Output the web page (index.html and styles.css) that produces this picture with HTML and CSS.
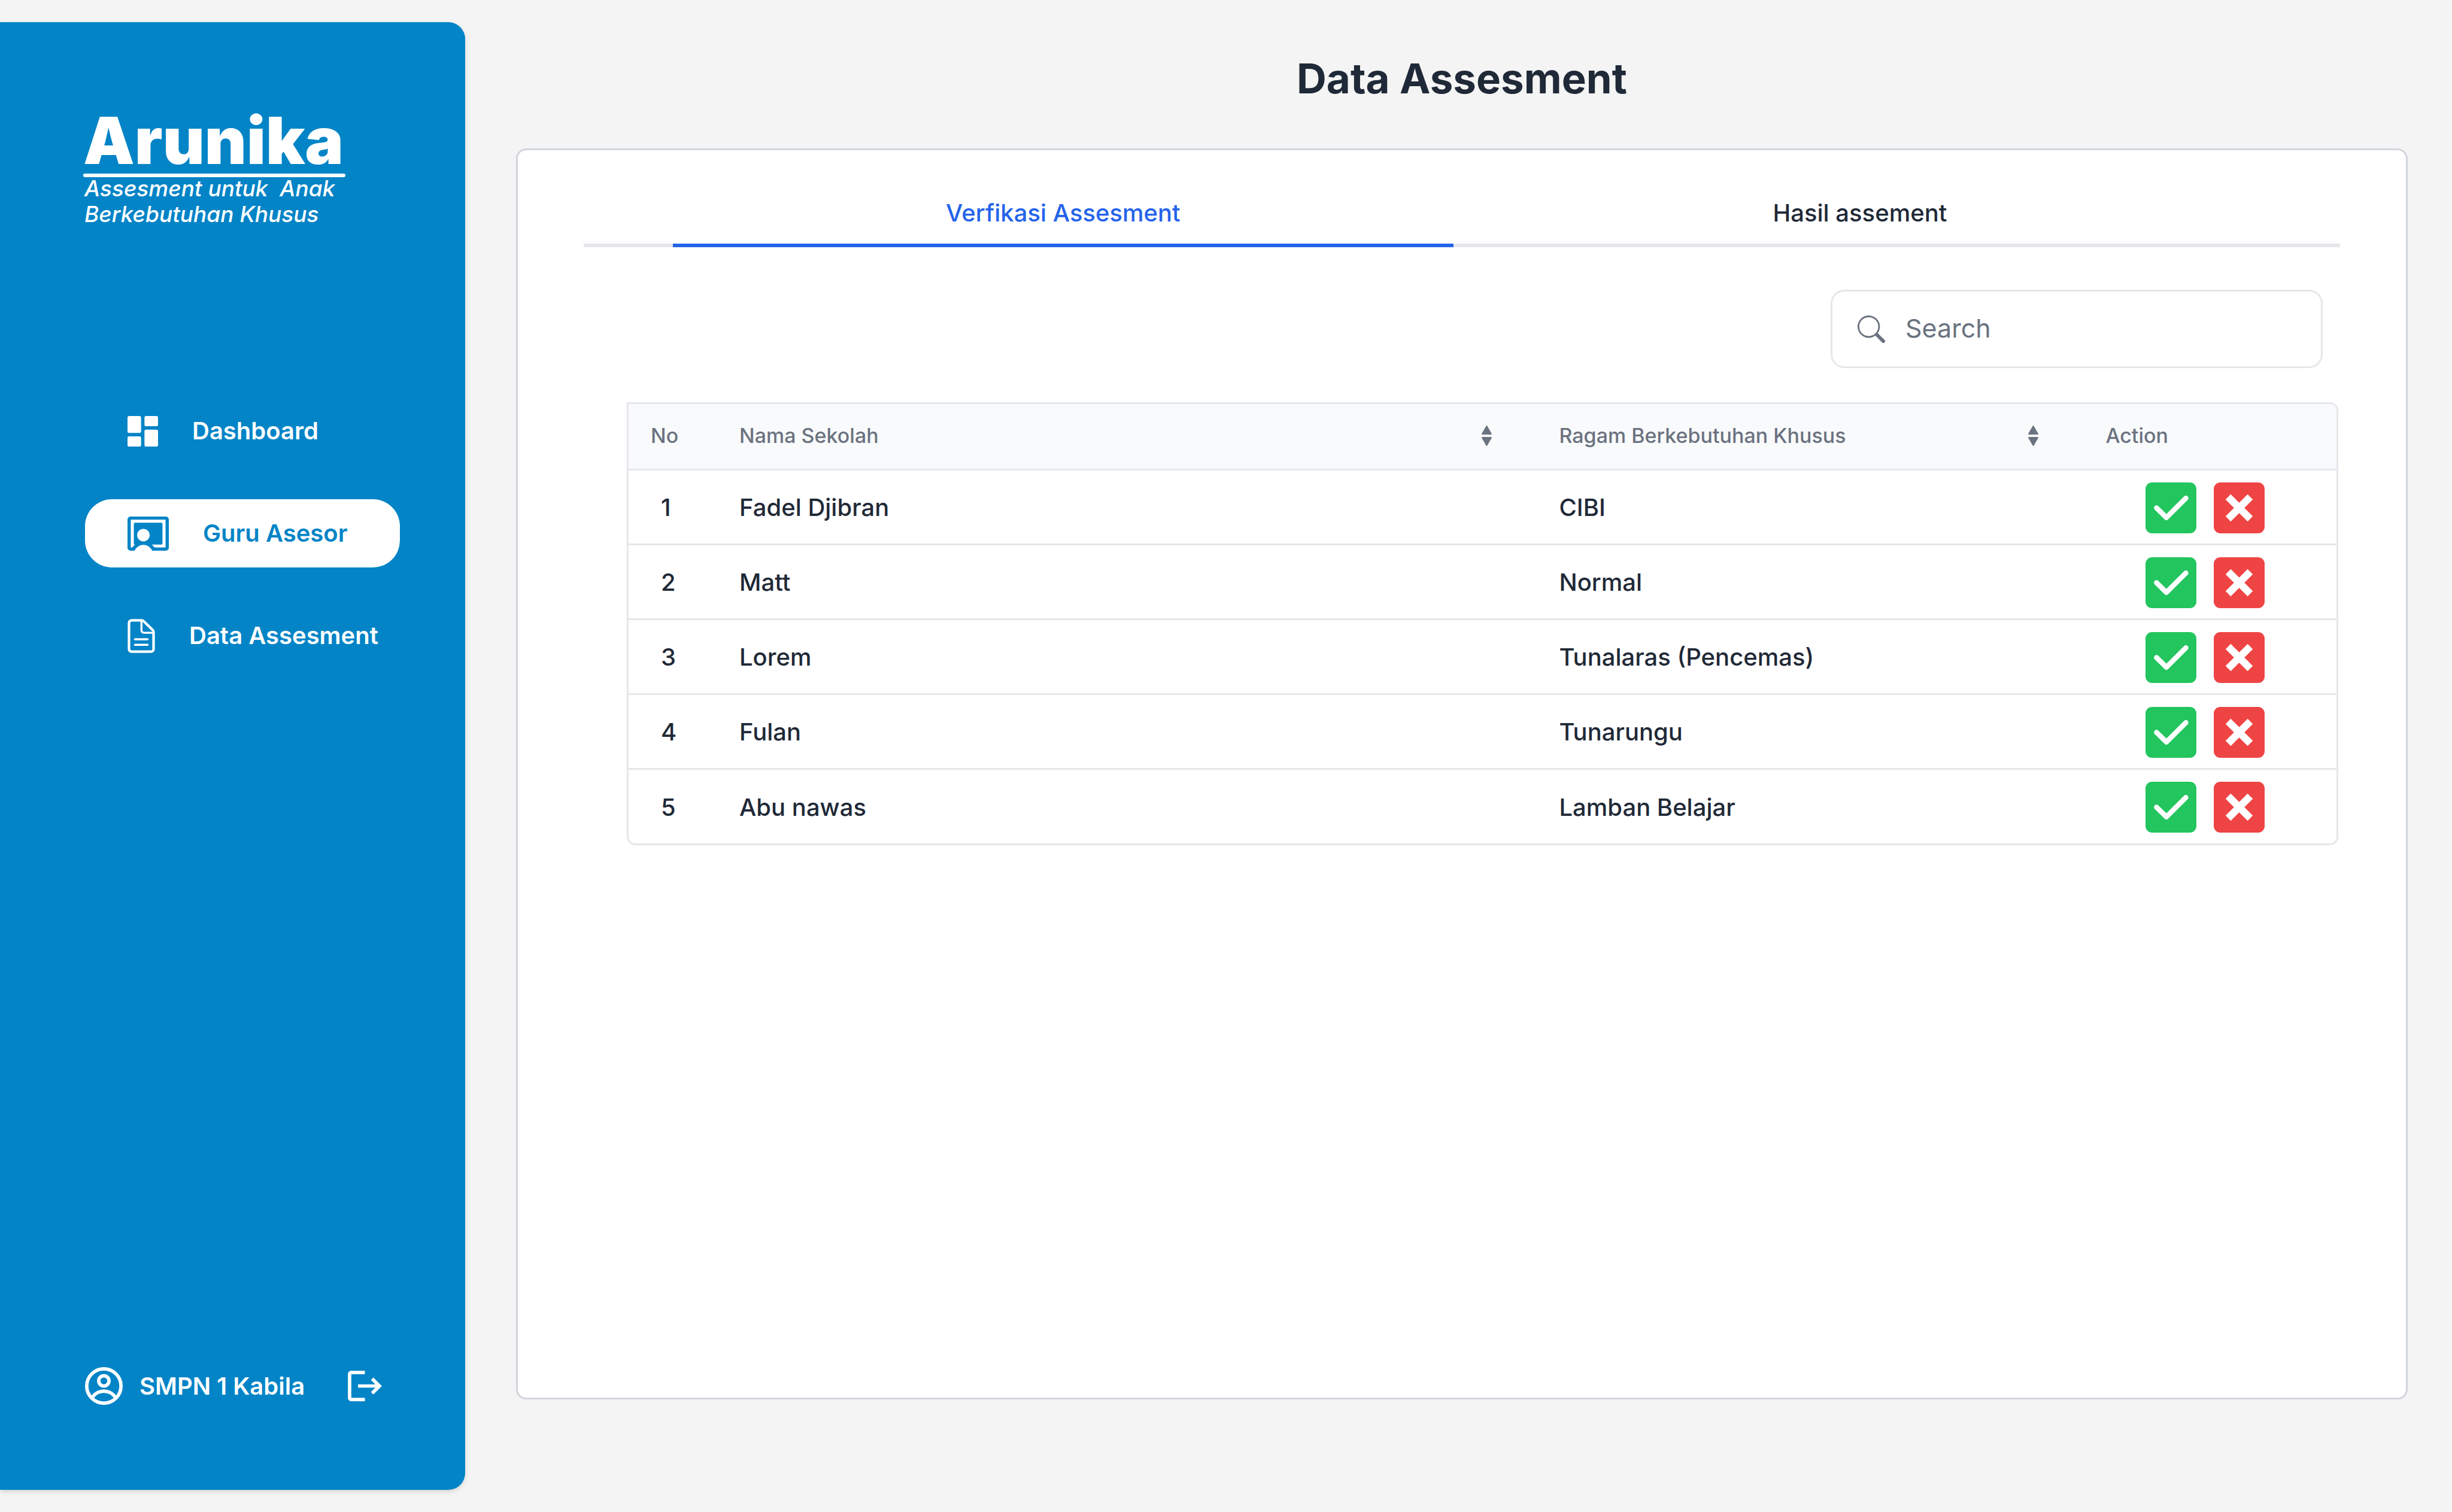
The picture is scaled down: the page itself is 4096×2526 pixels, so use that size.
FILE: index.html
```html
<!DOCTYPE html>
<html lang="id">
<head>
<meta charset="utf-8">
<meta name="viewport" content="width=device-width, initial-scale=1">
<title>Arunika - Data Assesment</title>
<link rel="stylesheet" href="styles.css">
</head>
<body>
<svg class="sprite" aria-hidden="true">
  <symbol id="icon-check" viewBox="0 0 30 30"><path d="M6.5 15l5.8 5.7L23.8 9.3" fill="none" stroke="currentColor" stroke-width="3" stroke-linecap="round" stroke-linejoin="round"/></symbol>
  <symbol id="icon-cross" viewBox="0 0 30 30"><path d="M8.5 8.5l13 13M21.5 8.5l-13 13" fill="none" stroke="currentColor" stroke-width="4.3"/></symbol>
  <symbol id="icon-sort" viewBox="0 0 17 34"><path d="M8.5 1L16 14H1zM8.5 33L16 20H1z" fill="currentColor" stroke="currentColor" stroke-width="2" stroke-linejoin="round"/></symbol>
</svg>
<div class="layout">
  <aside class="sidebar">
    <div class="brand">
      <p class="brand-name">Arunika</p>
      <p class="brand-tagline">Assesment untuk&nbsp; Anak<br>Berkebutuhan Khusus</p>
    </div>
    <nav class="menu">
      <a class="menu-item" href="#">
        <svg class="icon-dashboard" viewBox="0 0 18 18" fill="currentColor"><rect width="8" height="10" rx="1"/><rect x="10" width="8" height="6" rx="1"/><rect y="12" width="8" height="6" rx="1"/><rect x="10" y="8" width="8" height="10" rx="1"/></svg>
        Dashboard
      </a>
      <a class="menu-item menu-item-active" href="#">
        <svg class="icon-teacher" viewBox="0 0 24.2 20"><rect width="24.2" height="20" rx="1.7" fill="#0284c7"/><rect x="1.9" y="1.8" width="20.4" height="16.3" fill="#fff"/><rect x="3.7" y="3.6" width="16.8" height="12.8" rx=".9" fill="#0284c7"/><circle cx="9.3" cy="22.3" r="7.7" fill="#0284c7"/><circle cx="9.3" cy="22.2" r="5.6" fill="#fff"/><circle cx="9.3" cy="10.9" r="3.7" fill="#fff"/></svg>
        Guru Asesor
      </a>
      <a class="menu-item" href="#">
        <svg class="icon-file" viewBox="0 0 16 20" fill="none" stroke="currentColor" stroke-linecap="round" stroke-linejoin="round"><path d="M2.5.8h5.8c.5 0 .8.2 1.1.5l5.3 5.2c.3.3.5.7.5 1.1v9.900c0 1-.7 1.700-1.700 1.700h-11c-1 0-1.700-.7-1.700-1.700v-15C.8 1.500 1.500.8 2.500.8z" stroke-width="1.5"/><path d="M8.100 1v5.600c0 .9.600 1.500 1.500 1.500h5.400M4.300 11.900h7.400M4.300 15.200h7.400" stroke-width="1.200"/></svg>
        Data Assesment
      </a>
    </nav>
    <div class="account">
      <svg class="icon-user" viewBox="0 0 22 22" fill="none" stroke="#fff" stroke-width="2"><circle cx="11" cy="11" r="10"/><circle cx="11" cy="8" r="3"/><path d="M4 18.100A8 8 0 0 1 18 18.100"/></svg>
      <span class="account-name">SMPN 1 Kabila</span>
      <button class="logout" type="button" aria-label="Keluar"><svg class="icon-logout" viewBox="0 0 20 18" fill="currentColor"><path d="M10 0v2H2v14h8v2H2c-1.100 0-2-.9-2-2V2C0 .9.900 0 2 0zM15 4l5 5-5 5-1.400-1.450L16.170 10H6V8h10.170l-2.570-2.550z"/></svg></button>
    </div>
  </aside>

  <main class="content">
    <h1 class="page-title">Data Assesment</h1>
    <section class="card">
      <div class="tabs" role="tablist">
        <button class="tab tab-active" type="button" role="tab" aria-selected="true">Verfikasi Assesment</button>
        <button class="tab" type="button" role="tab" aria-selected="false">Hasil assement</button>
      </div>
      <label class="search">
        <svg class="icon-search" viewBox="0 0 16 16" fill="currentColor"><path d="M11.742 10.344a6.500 6.500 0 1 0-1.397 1.398h-.001c.03.04.062.078.098.115l3.850 3.850a1 1 0 0 0 1.415-1.414l-3.850-3.850a1.007 1.007 0 0 0-.115-.1zM12 6.500a5.500 5.500 0 1 1-11 0 5.500 5.500 0 0 1 11 0z"/></svg>
        <input class="search-input" type="search" placeholder="Search" aria-label="Search">
      </label>
      <div class="table-wrap">
        <table class="table">
          <colgroup><col class="col-no"><col class="col-name"><col class="col-kind"><col></colgroup>
          <thead>
            <tr>
              <th class="head-no" scope="col">No</th>
              <th scope="col"><div class="sortable">Nama Sekolah <button class="sort" type="button" aria-label="Urutkan nama"><svg class="icon-sort"><use href="#icon-sort"/></svg></button></div></th>
              <th scope="col"><div class="sortable">Ragam Berkebutuhan Khusus <button class="sort" type="button" aria-label="Urutkan ragam"><svg class="icon-sort"><use href="#icon-sort"/></svg></button></div></th>
              <th scope="col">Action</th>
            </tr>
          </thead>
          <tbody>
            <tr><td class="cell-no">1</td><td>Fadel Djibran</td><td>CIBI</td><td><div class="actions"><button class="action accept" type="button" aria-label="Terima"><svg><use href="#icon-check"/></svg></button><button class="action reject" type="button" aria-label="Tolak"><svg><use href="#icon-cross"/></svg></button></div></td></tr>
            <tr><td class="cell-no">2</td><td>Matt</td><td>Normal</td><td><div class="actions"><button class="action accept" type="button" aria-label="Terima"><svg><use href="#icon-check"/></svg></button><button class="action reject" type="button" aria-label="Tolak"><svg><use href="#icon-cross"/></svg></button></div></td></tr>
            <tr><td class="cell-no">3</td><td>Lorem</td><td>Tunalaras (Pencemas)</td><td><div class="actions"><button class="action accept" type="button" aria-label="Terima"><svg><use href="#icon-check"/></svg></button><button class="action reject" type="button" aria-label="Tolak"><svg><use href="#icon-cross"/></svg></button></div></td></tr>
            <tr><td class="cell-no">4</td><td>Fulan</td><td>Tunarungu</td><td><div class="actions"><button class="action accept" type="button" aria-label="Terima"><svg><use href="#icon-check"/></svg></button><button class="action reject" type="button" aria-label="Tolak"><svg><use href="#icon-cross"/></svg></button></div></td></tr>
            <tr><td class="cell-no">5</td><td>Abu nawas</td><td>Lamban Belajar</td><td><div class="actions"><button class="action accept" type="button" aria-label="Terima"><svg><use href="#icon-check"/></svg></button><button class="action reject" type="button" aria-label="Tolak"><svg><use href="#icon-cross"/></svg></button></div></td></tr>
          </tbody>
        </table>
      </div>
    </section>
  </main>
</div>
</body>
</html>
```
FILE: styles.css
```css
*, *::before, *::after { box-sizing: border-box; }
body { margin: 0; background: #f4f4f4; color: #1f2937; font: 500 40px/48px Inter, sans-serif; }
button { margin: 0; padding: 0; border: 0; background: none; color: inherit; font: inherit; cursor: pointer; }
svg { display: block; flex: none; }
p, h1 { margin: 0; }
.sprite { display: none; }

.layout { display: flex; min-height: 100vh; }

/* Sidebar */
.sidebar {
  display: flex; flex-direction: column; flex: none;
  width: 777px; margin: 37px 0; padding: 146px 109px 142px 142px;
  border-radius: 0 28px 28px 0; background: #0284c7; color: #fff;
  box-shadow: 0 3px 9px rgba(0, 0, 0, .1), 0 3px 6px -3px rgba(0, 0, 0, .1);
  font-weight: 600;
}
.brand { width: 438px; margin-left: -3px; }
.brand-name { font-size: 108px; font-weight: 900; line-height: 104px; }
.brand-name::after { content: ""; display: block; height: 6px; margin-top: 3px; border-radius: 3px; background: #fff; }
.brand-tagline { margin-top: -3px; padding-left: 2px; font-size: 37px; font-weight: 500; font-style: italic; line-height: 43px; white-space: nowrap; }

.menu { display: flex; flex-direction: column; gap: 57px; margin-top: 284px; }
.menu-item { display: flex; align-items: center; gap: 57px; height: 114px; padding-left: 71px; border-radius: 45px; color: #fff; text-decoration: none; white-space: nowrap; }
.menu-item-active { background: #fff; color: #0284c7; }
.icon-dashboard { width: 51px; height: 51px; }
.icon-teacher { width: 69px; height: 57px; }
.icon-file { width: 46px; height: 57px; }

.account { display: flex; align-items: center; gap: 28px; margin-top: auto; }
.account-name { white-space: nowrap; }
.icon-user { width: 63px; height: 63px; }
.logout { margin-left: auto; margin-right: 30px; }
.icon-logout { width: 57px; height: 51px; }

/* Main area */
.content { display: flex; flex: 1; flex-direction: column; min-width: 0; padding: 90px 74px 188px 85px; }
.page-title { margin-bottom: 76px; font-size: 69px; font-weight: 700; line-height: 82px; text-align: center; }
.card { flex: 1; padding: 54px 110px; border: 3px solid #d1d5db; border-radius: 17px; background: #fff; }

.tabs { display: grid; grid-template-columns: 48fr 50fr; padding: 0 123px 0 149px; border-bottom: 6px solid #e5e7eb; }
.tab { margin-bottom: -6px; padding: 27px 0; border-bottom: 6px solid transparent; }
.tab-active { border-color: #2563eb; color: #2563eb; }

.search { display: flex; align-items: center; gap: 34px; width: 822px; height: 131px; margin: 71px 29px 57px auto; padding: 0 42px; border: 3px solid #e5e7eb; border-radius: 23px; color: #6b7280; }
.icon-search { width: 46px; height: 46px; }
.search-input { flex: 1; min-width: 0; padding: 0 0 4px; border: 0; outline: 0; background: none; color: #1f2937; font: 400 43px/52px Inter, sans-serif; }
.search-input::placeholder { color: #6b7280; opacity: 1; }

.table-wrap { margin: 0 3px 0 72px; overflow: hidden; border: 3px solid #e5e7eb; border-radius: 0 14px 14px 14px; }
.table { width: 100%; border-collapse: separate; border-spacing: 0; table-layout: fixed; }
.col-no { width: 145px; }
.col-name { width: 48%; }
.col-kind { width: 32%; }
.table th { height: 111px; padding: 0 33px 2px 40px; border-bottom: 3px solid #e5e7eb; background: #f9fafb; color: #6b7280; font-size: 34px; font-weight: 500; text-align: left; }
.table .head-no { padding-left: 37px; }
.table td { height: 125px; padding: 2px 33px 0 40px; border-bottom: 3px solid #e5e7eb; }
.table tr:last-child td { height: 123px; border-bottom: 0; }
.table .cell-no { padding-left: 54px; }
.sortable { display: flex; align-items: center; justify-content: space-between; padding-right: 39px; }
.icon-sort { width: 17px; height: 34px; }
.actions { display: flex; gap: 29px; padding-left: 67px; }
.action { width: 85px; height: 85px; border-radius: 11px; color: #fff; }
.action svg { width: 85px; height: 85px; }
.accept { background: #22c55e; }
.reject { background: #ef4444; }
```
